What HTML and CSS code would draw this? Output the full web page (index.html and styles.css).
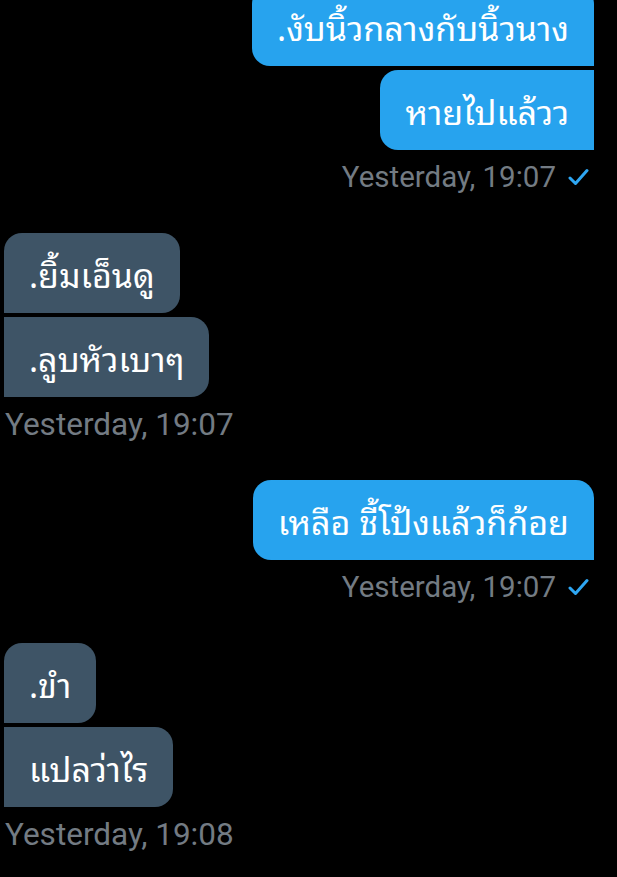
FILE: index.html
```html
<!DOCTYPE html>
<html lang="th">
<head>
    <meta charset="UTF-8">
    <meta name="viewport" content="width=device-width, initial-scale=1.0">
    <title>Chat</title>
    <link rel="stylesheet" href="styles.css">
</head>
<body>

<div class="chat">
    <div class="group out">
        <div class="bubble">.งับนิ้วกลางกับนิ้วนาง</div>
        <div class="bubble">หายไปแล้วว</div>
        <div class="meta">
            <span>Yesterday, 19:07</span>
            <svg class="tick" width="21" height="18" viewBox="0 0 21 18"><polyline points="2,10 7.5,15.5 19,2.5" fill="none" stroke="#2ea6f2" stroke-width="3" stroke-linecap="round" stroke-linejoin="round"/></svg>
        </div>
    </div>

    <div class="group in">
        <div class="bubble">.ยิ้มเอ็นดู</div>
        <div class="bubble">.ลูบหัวเบาๆ</div>
        <div class="meta"><span>Yesterday, 19:07</span></div>
    </div>

    <div class="group out">
        <div class="bubble">เหลือ ชี้โป้งแล้วก็ก้อย</div>
        <div class="meta">
            <span>Yesterday, 19:07</span>
            <svg class="tick" width="21" height="18" viewBox="0 0 21 18"><polyline points="2,10 7.5,15.5 19,2.5" fill="none" stroke="#2ea6f2" stroke-width="3" stroke-linecap="round" stroke-linejoin="round"/></svg>
        </div>
    </div>

    <div class="group in">
        <div class="bubble">.ขำ</div>
        <div class="bubble">แปลว่าไร</div>
        <div class="meta"><span>Yesterday, 19:08</span></div>
    </div>
</div>

</body>
</html>
```

FILE: styles.css
```css
body {
    margin: 0;
    background: #000;
    font-family: "Noto Sans Thai Looped", "Noto Sans", sans-serif;
    overflow: hidden;
}
.chat {
    margin-top: -14px;
    padding: 0 23px 0 4px;
    display: flex;
    flex-direction: column;
    gap: 36px;
}
.group {
    display: flex;
    flex-direction: column;
    gap: 4px;
}
.group.out {
    align-items: flex-end;
}
.group.in {
    align-items: flex-start;
}
.bubble {
    color: #fff;
    font-size: 34px;
    line-height: 40px;
    padding: 20px 25px;
    border-radius: 18px;
    white-space: nowrap;
}
.out .bubble {
    background: #27a3ee;
    border-top-right-radius: 0;
    border-bottom-right-radius: 0;
}
.out .bubble:first-child {
    border-top-right-radius: 18px;
}
.in .bubble {
    background: #3e5466;
    border-top-left-radius: 0;
    border-bottom-left-radius: 0;
}
.in .bubble:first-child {
    border-top-left-radius: 18px;
}
.meta {
    display: flex;
    align-items: center;
    gap: 12px;
    margin-top: 3px;
    height: 40px;
    font-family: Roboto, "Liberation Sans", sans-serif;
    color: #737b83;
}
.out .meta {
    font-size: 29.5px;
    padding-right: 5px;
}
.in .meta {
    font-size: 31.5px;
    padding-left: 1px;
}
.tick {
    margin-top: 0;
}
```
